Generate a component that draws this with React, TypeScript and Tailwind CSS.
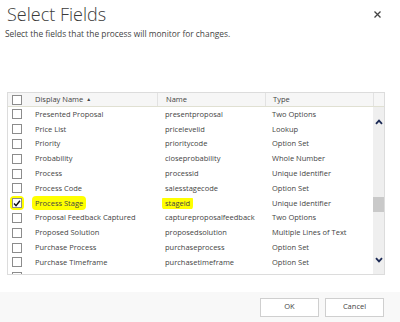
import React from 'react';

interface Field {
  display: string;
  name: string;
  type: string;
  checked?: boolean;
}

const fields: Field[] = [
  { display: 'Presented Proposal', name: 'presentproposal', type: 'Two Options' },
  { display: 'Price List', name: 'pricelevelid', type: 'Lookup' },
  { display: 'Priority', name: 'prioritycode', type: 'Option Set' },
  { display: 'Probability', name: 'closeprobability', type: 'Whole Number' },
  { display: 'Process', name: 'processid', type: 'Unique Identifier' },
  { display: 'Process Code', name: 'salesstagecode', type: 'Option Set' },
  { display: 'Process Stage', name: 'stageid', type: 'Unique Identifier', checked: true },
  { display: 'Proposal Feedback Captured', name: 'captureproposalfeedback', type: 'Two Options' },
  { display: 'Proposed Solution', name: 'proposedsolution', type: 'Multiple Lines of Text' },
  { display: 'Purchase Process', name: 'purchaseprocess', type: 'Option Set' },
  { display: 'Purchase Timeframe', name: 'purchasetimeframe', type: 'Option Set' },
];

function Checkbox({ checked }: { checked?: boolean }) {
  return (
    <div className="w-[10px] h-[10px] border border-[#8c8c8c] bg-white flex items-center justify-center">
      {checked && (
        <svg width="9" height="9" viewBox="0 0 9 9">
          <path d="M1.2 4.6 L3.4 7 L7.8 1.4" fill="none" stroke="#111" strokeWidth="1.6" />
        </svg>
      )}
    </div>
  );
}

export default function App() {
  return (
    <div
      className="w-[400px] h-[322px] bg-white flex flex-col text-[#444] overflow-hidden"
      style={{ fontFamily: '"Open Sans", "Liberation Sans", sans-serif' }}
    >
      {/* ヘッダー */}
      <div className="relative px-[5px] pt-[3px]">
        <div className="text-[18px] leading-[22px] font-light text-[#3a3a3a] pl-[2px]">Select Fields</div>
        <div className="text-[8.4px] leading-[12px] mt-[3px]">
          Select the fields that the process will monitor for changes.
        </div>
        <svg className="absolute right-[19px] top-[11px]" width="7" height="7" viewBox="0 0 7 7">
          <path d="M0.5 0.5 L6.5 6.5 M6.5 0.5 L0.5 6.5" stroke="#444" strokeWidth="1.3" />
        </svg>
      </div>

      {/* テーブル */}
      <div className="mt-[52px] ml-[7px] w-[378px] h-[183px] border border-[#dcdcdc] overflow-hidden text-[7.5px]">
        <div className="grid grid-cols-[22px_127px_108px_108px_11px] h-[14px] bg-[#f6f6f6] border-b border-[#e0e0d2]">
          <div className="flex items-center pl-[4px]">
            <Checkbox />
          </div>
          <div className="flex items-center pl-[5px]">
            Display Name
            <span className="ml-[3px] text-[5px]">▲</span>
          </div>
          <div className="flex items-center pl-[8px] border-l border-[#e2e2e2]">Name</div>
          <div className="flex items-center pl-[7px] border-l border-[#e2e2e2]">Type</div>
          <div className="border-l border-[#e2e2e2]" />
        </div>

        <div className="flex h-[167px]">
          <div className="w-[365px] overflow-hidden">
            {fields.map((f) => (
              <div key={f.name} className="grid grid-cols-[22px_127px_108px_108px] h-[14.8px] items-center">
                <div className="flex items-center pl-[4px]">
                  {f.checked ? (
                    <span className="bg-[#ffff00] rounded-[4px] px-[2px] py-[2px] -ml-[2px]">
                      <Checkbox checked />
                    </span>
                  ) : (
                    <Checkbox />
                  )}
                </div>
                <div className="pl-[5px] whitespace-nowrap">
                  {f.checked ? (
                    <span className="bg-[#ffff00] rounded-[4px] px-[3px] py-[2px] -ml-[3px]">{f.display}</span>
                  ) : (
                    f.display
                  )}
                </div>
                <div className="pl-[8px] whitespace-nowrap overflow-hidden">
                  {f.checked ? (
                    <span className="bg-[#ffff00] rounded-[4px] px-[3px] py-[2px] -ml-[3px]">{f.name}</span>
                  ) : (
                    f.name
                  )}
                </div>
                <div className="pl-[7px] whitespace-nowrap">{f.type}</div>
              </div>
            ))}
            {/* 途中で切れている次の行 */}
            <div className="h-[14.8px] flex items-center pl-[4px]">
              <Checkbox />
            </div>
          </div>
          {/* スクロールバー */}
          <div className="w-[11px] bg-[#efefef] flex flex-col items-center">
            <svg className="mt-[12px]" width="8" height="6" viewBox="0 0 8 6">
              <path d="M1 4.8 L4 1.6 L7 4.8" fill="none" stroke="#1c2a55" strokeWidth="1.8" />
            </svg>
            <div className="mt-[72px] w-[11px] h-[15px] bg-[#c9c9c9]" />
            <svg className="mt-[45px]" width="8" height="6" viewBox="0 0 8 6">
              <path d="M1 1.2 L4 4.4 L7 1.2" fill="none" stroke="#1c2a55" strokeWidth="1.8" />
            </svg>
          </div>
        </div>
      </div>

      {/* フッター */}
      <div className="mt-auto h-[30px] bg-[#f8f8f8] flex items-center justify-end gap-[6px] pr-[16px]">
        <button className="w-[59px] h-[19px] bg-white border border-[#cfcfcf] text-[7.5px] text-[#444]">OK</button>
        <button className="w-[59px] h-[19px] bg-white border border-[#cfcfcf] text-[7.5px] text-[#444]">Cancel</button>
      </div>
    </div>
  );
}
